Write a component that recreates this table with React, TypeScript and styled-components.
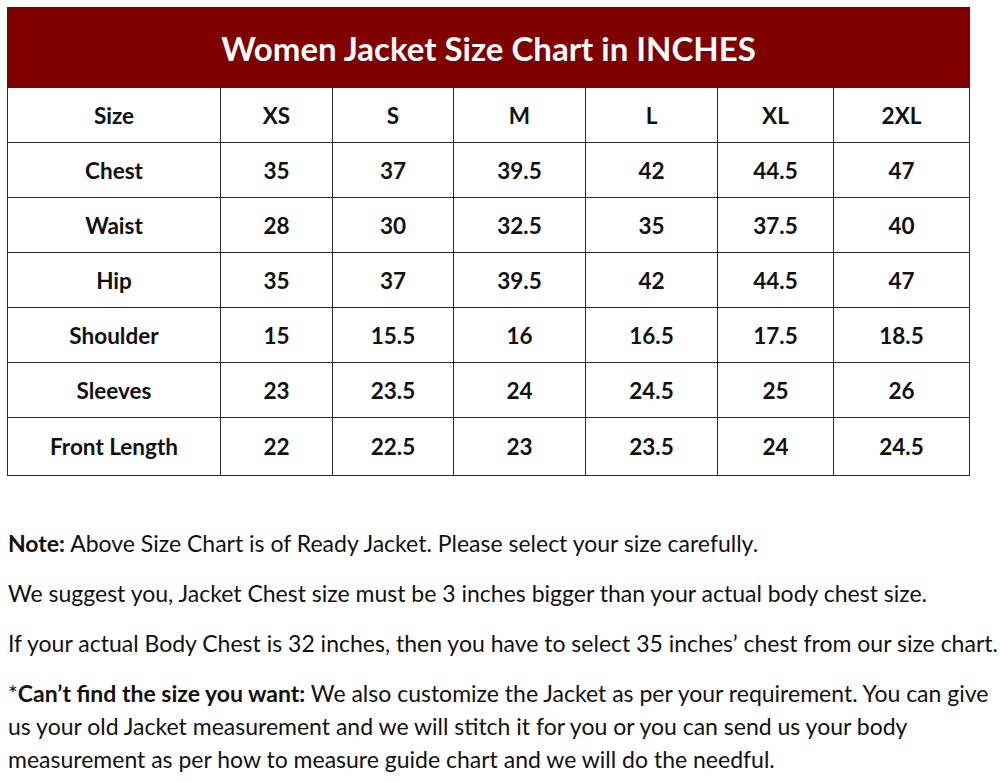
import React from "react";
import styled, { createGlobalStyle } from "styled-components";

const Global = createGlobalStyle`
  html, body { margin: 0; padding: 0; background: #ffffff; }
  body { font-family: "Lato", "Liberation Sans", sans-serif; color: #111; }
`;

const Page = styled.div`
  width: 1000px;
  padding: 7px 0 0 7px;
  box-sizing: border-box;
`;

const Table = styled.table`
  border-collapse: collapse;
  width: 962px;
  table-layout: fixed;
  font-family: "Lato", "Liberation Sans", sans-serif;
`;

const TitleCell = styled.th`
  background: #800000;
  color: #fff;
  height: 79px;
  padding: 0;
  font-size: 33px;
  font-weight: 700;
  border: 1px solid #5a1010;
  text-align: center;
  vertical-align: middle;
`;

const Row = styled.tr<{ $h?: number }>`
  height: ${(p) => p.$h ?? 55}px;
`;

const Cell = styled.td`
  border: 1px solid #2b2b2b;
  padding: 0;
  text-align: center;
  vertical-align: middle;
  font-size: 22.5px;
  font-weight: 700;
  color: #111;
`;

const Notes = styled.div`
  padding: 51px 0 0 1px;
  font-family: "Lato", "Liberation Sans", sans-serif;
  font-size: 23px;
  line-height: 33px;
  color: #111;
  white-space: nowrap;
`;

const Para = styled.p`
  margin: 0 0 17px;
`;

const Strong = styled.b`
  font-weight: 700;
`;

const widths = [213, 112, 121, 132, 132, 116, 136];

const rows: string[][] = [
  ["Size", "XS", "S", "M", "L", "XL", "2XL"],
  ["Chest", "35", "37", "39.5", "42", "44.5", "47"],
  ["Waist", "28", "30", "32.5", "35", "37.5", "40"],
  ["Hip", "35", "37", "39.5", "42", "44.5", "47"],
  ["Shoulder", "15", "15.5", "16", "16.5", "17.5", "18.5"],
  ["Sleeves", "23", "23.5", "24", "24.5", "25", "26"],
  ["Front Length", "22", "22.5", "23", "23.5", "24", "24.5"],
];

export default function App() {
  return (
    <Page>
      <Global />
      <Table>
        <colgroup>
          {widths.map((w, i) => (
            <col key={i} style={{ width: w }} />
          ))}
        </colgroup>
        <thead>
          <tr>
            <TitleCell colSpan={7}>Women Jacket Size Chart in INCHES</TitleCell>
          </tr>
        </thead>
        <tbody>
          {rows.map((r, i) => (
            <Row key={i} $h={i === rows.length - 1 ? 58 : 55}>
              {r.map((c, j) => (
                <Cell key={j}>{c}</Cell>
              ))}
            </Row>
          ))}
        </tbody>
      </Table>
      <Notes>
        <Para>
          <Strong>Note:</Strong> Above Size Chart is of Ready Jacket. Please select your size carefully.
        </Para>
        <Para>We suggest you, Jacket Chest size must be 3 inches bigger than your actual body chest size.</Para>
        <Para>
          If your actual Body Chest is 32 inches, then you have to select 35 inches’ chest from our size chart.
        </Para>
        <Para>
          *<Strong>Can’t find the size you want:</Strong> We also customize the Jacket as per your requirement. You can give
          <br />
          us your old Jacket measurement and we will stitch it for you or you can send us your body
          <br />
          measurement as per how to measure guide chart and we will do the needful.
        </Para>
      </Notes>
    </Page>
  );
}
